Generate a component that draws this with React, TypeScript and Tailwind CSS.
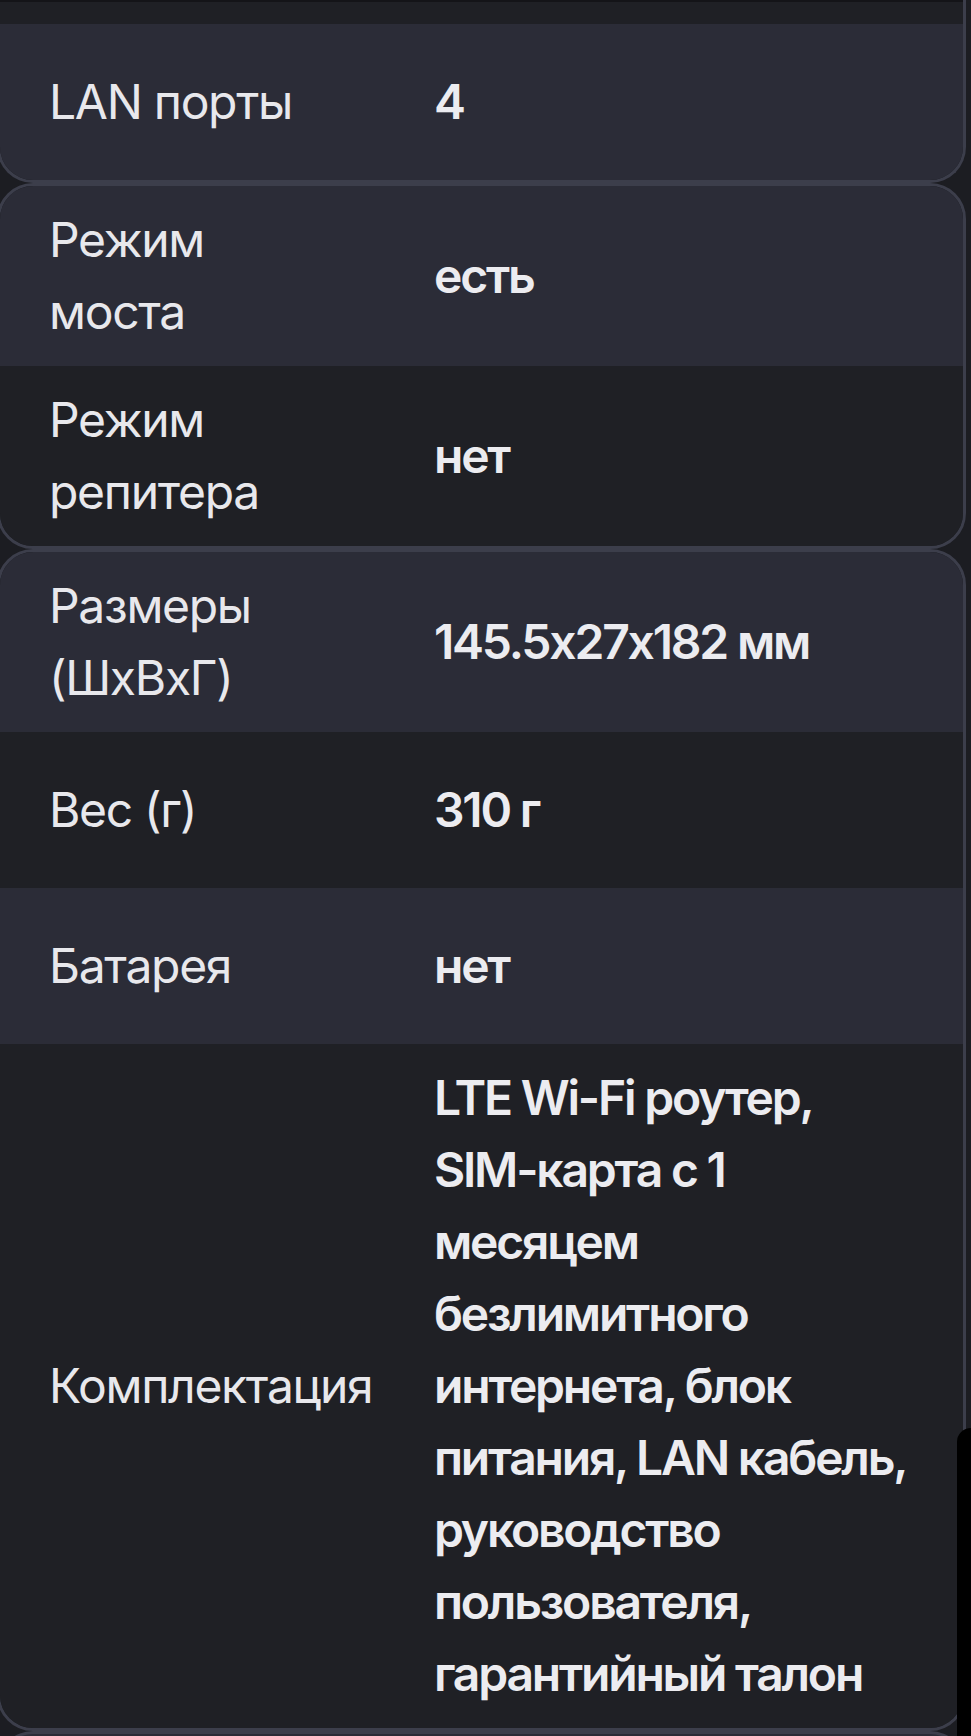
import React from "react";

type Row = { label: string; value: string };

const font = { fontFamily: "Inter, 'Noto Sans', sans-serif" };

function Cell({ row, light }: { row: Row; light: boolean }) {
  return (
    <div
      className={`grid grid-cols-[434px_1fr] min-h-[156px] py-[18px] items-center ${
        light ? "bg-[#2b2c37]" : "bg-[#1f2025]"
      }`}
    >
      <div className="pl-[49px]">
        <div className="max-w-[290px] text-[48px] leading-[72px] font-normal tracking-[-1.3px] text-[#e8e8ec] [font-feature-settings:'calt'_0]">
          {row.label}
        </div>
      </div>
      <div className="pr-[40px] text-[48px] leading-[72px] font-semibold tracking-[-2.2px] text-[#ececf0] [font-feature-settings:'calt'_0]">
        {row.value}
      </div>
    </div>
  );
}

export default function App() {
  return (
    <div
      className="relative w-[971px] h-[1736px] overflow-hidden bg-[#1c1d22]"
      style={font}
    >
      <div className="ml-[-3px] mr-[5px] flex flex-col">
        {/* card 1 */}
        <div className="border-[3px] border-t-0 border-[#3c3e4b] rounded-b-[36px] overflow-hidden">
          <div className="h-[24px] bg-[#1f2025] border-t-2 border-[#141418]" />
          <Cell row={{ label: "LAN порты", value: "4" }} light />
        </div>
        {/* card 2 */}
        <div className="border-[3px] border-[#3c3e4b] rounded-[36px] overflow-hidden">
          <Cell row={{ label: "Режим моста", value: "есть" }} light />
          <Cell row={{ label: "Режим репитера", value: "нет" }} light={false} />
        </div>
        {/* card 3 */}
        <div className="border-[3px] border-[#3c3e4b] rounded-[36px] overflow-hidden">
          <Cell row={{ label: "Размеры (ШхВхГ)", value: "145.5x27x182 мм" }} light />
          <Cell row={{ label: "Вес (г)", value: "310 г" }} light={false} />
          <Cell row={{ label: "Батарея", value: "нет" }} light />
          <Cell
            row={{
              label: "Комплектация",
              value:
                "LTE Wi-Fi роутер, SIM-карта с 1 месяцем безлимитного интернета, блок питания, LAN кабель, руководство пользователя, гарантийный талон",
            }}
            light={false}
          />
        </div>
        {/* next card top */}
        <div className="h-[40px] border-[3px] border-b-0 border-[#3c3e4b] rounded-t-[36px] bg-[#2b2c37]" />
      </div>
      <div className="absolute right-0 top-[1428px] w-[14px] h-[308px] bg-black rounded-tl-[14px]" />
    </div>
  );
}
